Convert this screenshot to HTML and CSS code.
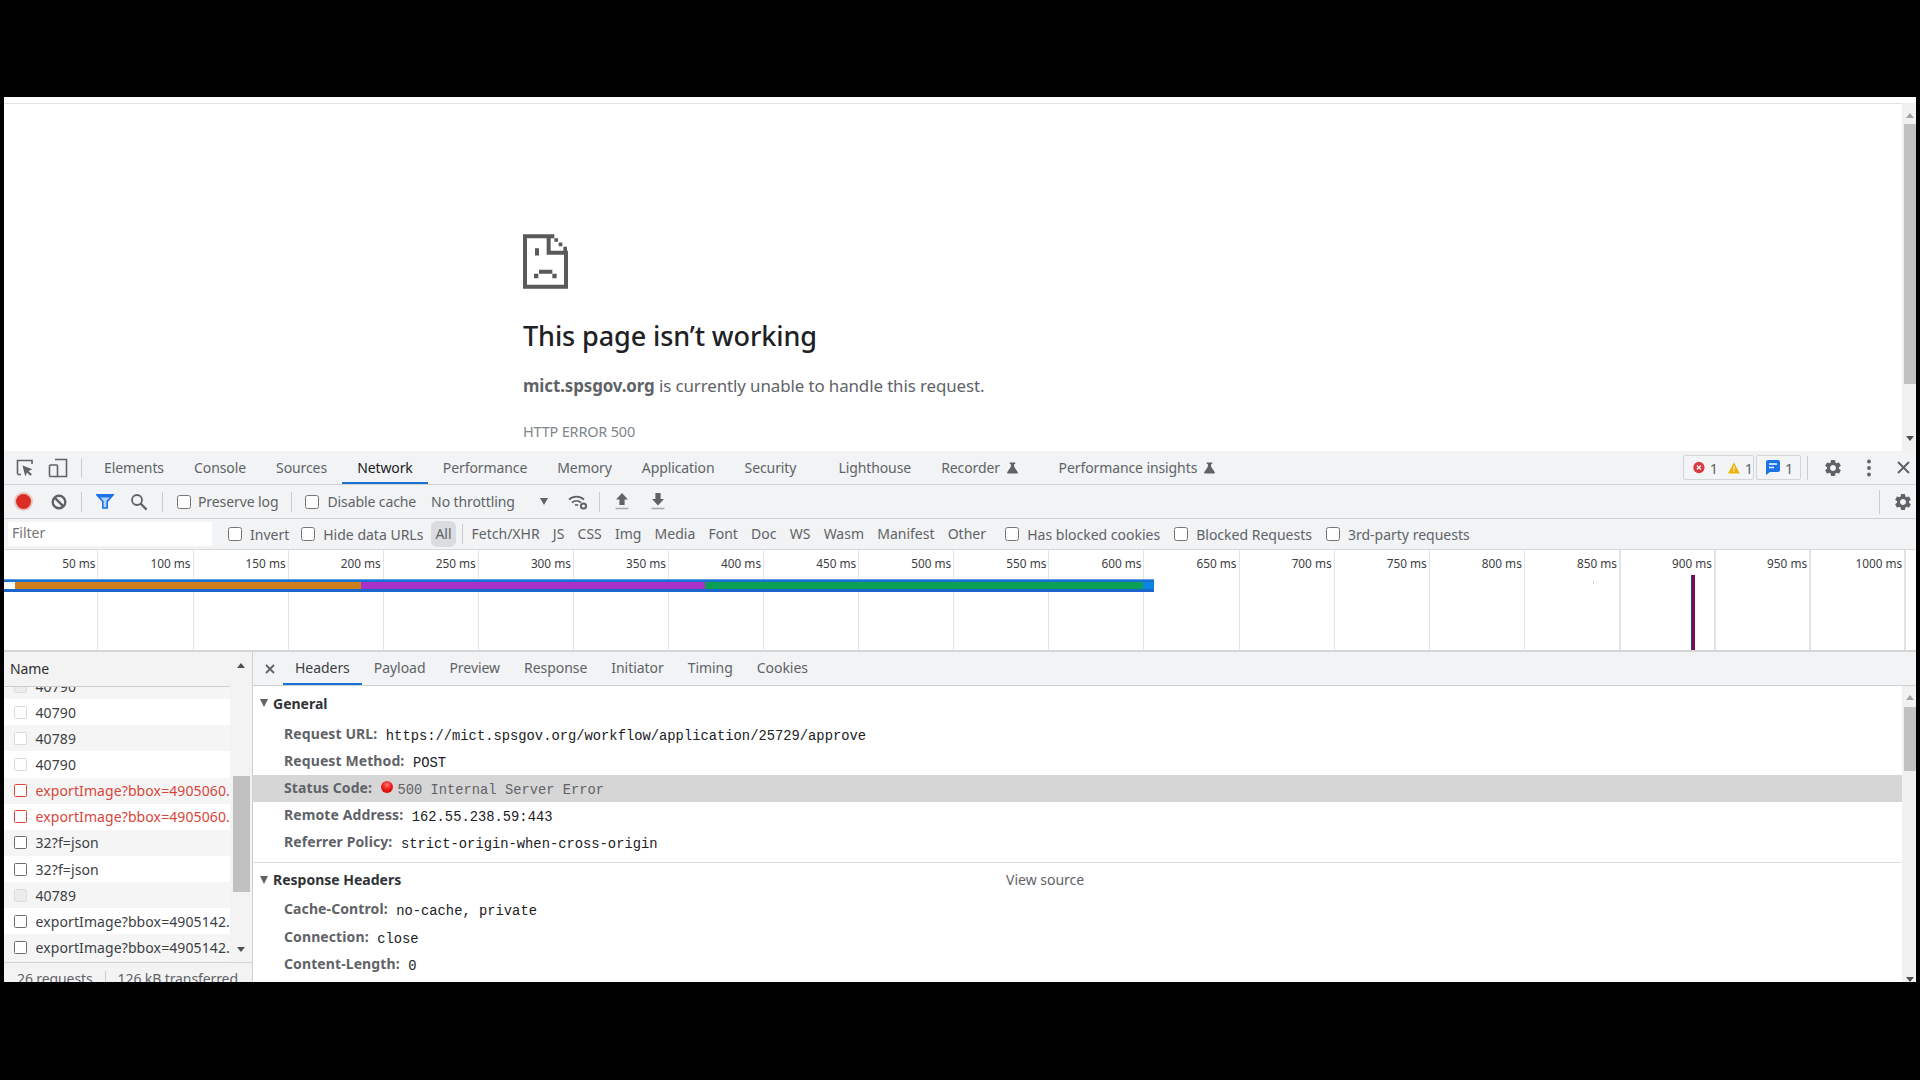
FILE: index.html
```html
<!DOCTYPE html>
<html lang="en">
<head>
<meta charset="utf-8">
<title>This page isn't working</title>
<link rel="stylesheet" href="styles.css">
</head>
<body>
<svg class="sprite" aria-hidden="true">
  <symbol id="gear" viewBox="0 0 24 24"><path d="M19.14 12.94c.04-.3.06-.61.06-.94 0-.32-.02-.64-.07-.94l2.03-1.58a.49.49 0 0 0 .12-.61l-1.92-3.32a.488.488 0 0 0-.59-.22l-2.39.96c-.5-.38-1.03-.7-1.62-.94l-.36-2.54a.484.484 0 0 0-.48-.41h-3.84c-.24 0-.43.17-.47.41l-.36 2.54c-.59.24-1.13.57-1.62.94l-2.39-.96c-.22-.08-.47 0-.59.22L2.74 8.87c-.12.21-.08.47.12.61l2.03 1.58c-.05.3-.09.63-.09.94s.02.64.07.94l-2.03 1.58a.49.49 0 0 0-.12.61l1.92 3.32c.12.22.37.29.59.22l2.39-.96c.5.38 1.03.7 1.62.94l.36 2.54c.05.24.24.41.48.41h3.84c.24 0 .44-.17.47-.41l.36-2.54c.59-.24 1.13-.56 1.62-.94l2.39.96c.22.08.47 0 .59-.22l1.92-3.32c.12-.22.07-.47-.12-.61l-2.01-1.58zM12 15.6c-1.98 0-3.6-1.62-3.6-3.6s1.62-3.6 3.6-3.6 3.6 1.62 3.6 3.6-1.62 3.6-3.6 3.6z" fill="currentColor"/></symbol>
  <symbol id="flask" viewBox="0 0 12 12"><path d="M3 0h6v1.5H7.8v3l4 6.2c.3.6-.1 1.3-.8 1.3H1c-.7 0-1.1-.7-.8-1.3l4-6.2v-3H3z" fill="currentColor"/></symbol>
</svg>
<main class="frame">
  <section class="page">
    <div class="page-body">
      <div class="error">
        <svg class="sad" viewBox="0 0 135 164" aria-hidden="true"><path d="M0 0h94v12H83v38h52v114H0zM12 12v140h111V62H71V12zM94 12h11v11H94zM107 25h11v11h-11zM121 38h11v12h-11zM36 42h12v22H36zM48 107h40v12H48zM33 119h13v13H33zM88 119h13v13H88z" fill="#5a5a5a" fill-rule="evenodd"/></svg>
        <h1 class="err-title">This page isn’t working</h1>
        <p class="err-text"><strong>mict.spsgov.org</strong> is currently unable to handle this request.</p>
        <p class="err-code">HTTP ERROR 500</p>
      </div>
    </div>
    <div class="vscroll page-scroll">
      <span class="arr up grey"></span>
      <span class="vthumb page-thumb"></span>
      <span class="arr down page-down"></span>
    </div>
  </section>

  <section class="devtools">
    <header class="bar tabbar">
      <span class="ib inspect">
        <svg width="19" height="19" viewBox="0 0 19 19" aria-hidden="true"><path d="M2.5 16V2.5H17V6" fill="none" stroke="#5f6368" stroke-width="1.6"/><path d="M2.5 16.5H6" fill="none" stroke="#5f6368" stroke-width="1.6"/><path d="M7.5 7.5l10 3.8-4 1.6 3.4 3.4-1.5 1.5-3.4-3.4-1.7 4z" fill="#5f6368"/></svg>
      </span>
      <span class="ib device">
        <svg width="20" height="20" viewBox="0 0 20 20" aria-hidden="true"><path d="M7 1.5h11.5v17H7" fill="none" stroke="#5f6368" stroke-width="1.6"/><rect x="1.5" y="7" width="8" height="11.5" rx="1" fill="#f1f3f4" stroke="#5f6368" stroke-width="1.6"/></svg>
      </span>
      <span class="sep sep-tab"></span>
      <nav class="tabs">
        <span class="tab">Elements</span>
        <span class="tab">Console</span>
        <span class="tab">Sources</span>
        <span class="tab active">Network</span>
        <span class="tab">Performance</span>
        <span class="tab">Memory</span>
        <span class="tab">Application</span>
        <span class="tab">Security</span>
        <span class="tab tab-gap">Lighthouse</span>
        <span class="tab">Recorder<svg class="flask" aria-hidden="true"><use href="#flask"/></svg></span>
        <span class="tab tab-gap-b">Performance insights<svg class="flask" aria-hidden="true"><use href="#flask"/></svg></span>
      </nav>
      <div class="tab-right">
        <span class="badge badge-issues">
          <svg width="13" height="13" viewBox="0 0 13 13" aria-hidden="true"><circle cx="6.5" cy="6.5" r="6.2" fill="#d93a43"/><path d="M4.3 4.3l4.4 4.4M8.7 4.3l-4.4 4.4" stroke="#fff" stroke-width="1.3"/></svg>
          <span class="num">1</span>
          <svg class="warn" width="13" height="12" viewBox="0 0 13 12" aria-hidden="true"><path d="M6.5 0L13 12H0z" fill="#eab308"/><path d="M6.5 4v4M6.5 9v1.4" stroke="#fff" stroke-width="1.2"/></svg>
          <span class="num">1</span>
        </span>
        <span class="badge badge-msg">
          <svg width="14" height="15" viewBox="0 0 14 15" aria-hidden="true"><path d="M2 0h10a2 2 0 0 1 2 2v8a2 2 0 0 1-2 2H4l-4 3V2a2 2 0 0 1 2-2z" fill="#1a73e8"/><path d="M3 4h8M3 7.5h5" stroke="#fff" stroke-width="1.5"/></svg>
          <span class="num">1</span>
        </span>
        <span class="sep sep-right"></span>
        <svg class="gear gear-top" aria-hidden="true"><use href="#gear"/></svg>
        <svg class="kebab" width="4" height="18" viewBox="0 0 4 18" aria-hidden="true"><circle cx="2" cy="2.5" r="1.9" fill="#5f6368"/><circle cx="2" cy="9" r="1.9" fill="#5f6368"/><circle cx="2" cy="15.5" r="1.9" fill="#5f6368"/></svg>
        <svg class="close" width="13" height="13" viewBox="0 0 13 13" aria-hidden="true"><path d="M1 1l11 11M12 1L1 12" stroke="#5f6368" stroke-width="2"/></svg>
      </div>
    </header>

    <div class="bar toolbar">
      <span class="ib rec-box"><span class="rec"></span></span>
      <span class="ib clear-box">
        <svg width="16" height="16" viewBox="0 0 16 16" aria-hidden="true"><circle cx="8" cy="8" r="6.3" fill="none" stroke="#5f6368" stroke-width="2.4"/><path d="M3.6 3.6l8.8 8.8" stroke="#5f6368" stroke-width="2.4"/></svg>
      </span>
      <span class="sep sep-a"></span>
      <span class="ib filter-box">
        <svg width="18" height="15" viewBox="0 0 18 15" aria-hidden="true"><path d="M0.8 0.8h16.4l-6 6.6V14H6.8V7.4z" fill="#b5d5f5" stroke="#1a73e8" stroke-width="1.6"/><path d="M0.8 0.8h16.4l-2.6 2.8H3.4z" fill="#1a73e8"/></svg>
      </span>
      <span class="ib search-box">
        <svg width="18" height="18" viewBox="0 0 18 18" aria-hidden="true"><circle cx="7" cy="7" r="5" fill="none" stroke="#5f6368" stroke-width="1.8"/><path d="M10.6 10.6l6 6" stroke="#5f6368" stroke-width="2.2"/></svg>
      </span>
      <span class="sep sep-b"></span>
      <label class="check preserve"><input type="checkbox">Preserve log</label>
      <span class="sep sep-c"></span>
      <label class="check disable"><input type="checkbox">Disable cache</label>
      <span class="throttle">No throttling<span class="arr-down"></span></span>
      <span class="ib wifi-box">
        <svg width="20" height="16" viewBox="0 0 20 16" aria-hidden="true"><path d="M1 5.5a11 11 0 0 1 15 0M4 8.5a7 7 0 0 1 9 0M7 11.3a3 3 0 0 1 3 0" fill="none" stroke="#5f6368" stroke-width="1.8"/><circle cx="15.5" cy="12" r="2.6" fill="none" stroke="#5f6368" stroke-width="2"/></svg>
      </span>
      <span class="sep sep-d"></span>
      <span class="ib up-box">
        <svg width="14" height="17" viewBox="0 0 14 17" aria-hidden="true"><path d="M7 0l6 6.5H9.6V12H4.4V6.5H1z" fill="#5f6368"/><path d="M0.5 15.5h13" stroke="#a5a8ac" stroke-width="1.5"/></svg>
      </span>
      <span class="ib down-box">
        <svg width="14" height="17" viewBox="0 0 14 17" aria-hidden="true"><path d="M4.4 0h5.2v6H13l-6 6.5L1 6h3.4z" fill="#5f6368"/><path d="M0.5 15.5h13" stroke="#a5a8ac" stroke-width="1.5"/></svg>
      </span>
      <span class="sep sep-e"></span>
      <svg class="gear gear-low" aria-hidden="true"><use href="#gear"/></svg>
    </div>

    <div class="bar filterbar">
      <span class="filter-input">Filter</span>
      <label class="check invert"><input type="checkbox">Invert</label>
      <label class="check hide"><input type="checkbox">Hide data URLs</label>
      <span class="type all">All</span>
      <span class="sep sep-f"></span>
      <span class="type">Fetch/XHR</span>
      <span class="type">JS</span>
      <span class="type">CSS</span>
      <span class="type">Img</span>
      <span class="type">Media</span>
      <span class="type">Font</span>
      <span class="type">Doc</span>
      <span class="type">WS</span>
      <span class="type">Wasm</span>
      <span class="type">Manifest</span>
      <span class="type">Other</span>
      <label class="check c-blocked"><input type="checkbox">Has blocked cookies</label>
      <label class="check c-req"><input type="checkbox">Blocked Requests</label>
      <label class="check c-3rd"><input type="checkbox">3rd-party requests</label>
    </div>

    <div class="overview">
      <div class="ticks">
        <span class="tick">50 ms</span><span class="tick">100 ms</span><span class="tick">150 ms</span><span class="tick">200 ms</span>
        <span class="tick">250 ms</span><span class="tick">300 ms</span><span class="tick">350 ms</span><span class="tick">400 ms</span>
        <span class="tick">450 ms</span><span class="tick">500 ms</span><span class="tick">550 ms</span><span class="tick">600 ms</span>
        <span class="tick">650 ms</span><span class="tick">700 ms</span><span class="tick">750 ms</span><span class="tick">800 ms</span>
        <span class="tick wide">850 ms</span><span class="tick thick">900 ms</span><span class="tick thick">950 ms</span><span class="tick thick">1000 ms</span>
      </div>
      <div class="wf"><i class="seg s-white"></i><i class="seg s-orange"></i><i class="seg s-purple"></i><i class="seg s-green"></i><i class="seg s-blue"></i></div>
      <span class="speck"></span>
      <span class="loadline"></span>
    </div>

    <div class="lower">
      <aside class="names">
        <div class="names-main">
          <div class="names-list">
            <div class="name-head">Name</div>
            <div class="rows">
              <div class="row odd partial"><span class="fi fi-pale"></span>40790</div>
              <div class="row"><span class="fi fi-light"></span>40790</div>
              <div class="row odd"><span class="fi fi-light"></span>40789</div>
              <div class="row"><span class="fi fi-light"></span>40790</div>
              <div class="row odd err"><span class="fi fi-red"></span>exportImage?bbox=4905060.</div>
              <div class="row err"><span class="fi fi-red"></span>exportImage?bbox=4905060.</div>
              <div class="row odd"><span class="fi fi-dark"></span>32?f=json</div>
              <div class="row"><span class="fi fi-dark"></span>32?f=json</div>
              <div class="row odd"><span class="fi fi-pale"></span>40789</div>
              <div class="row"><span class="fi fi-dark"></span>exportImage?bbox=4905142.</div>
              <div class="row odd"><span class="fi fi-dark"></span>exportImage?bbox=4905142.</div>
            </div>
          </div>
          <div class="names-scroll">
            <span class="arr up"></span>
            <span class="vthumb names-thumb"></span>
            <span class="arr down names-down"></span>
          </div>
        </div>
        <footer class="summary"><span>26 requests</span><span class="sep sep-sum"></span><span>126 kB transferred</span></footer>
      </aside>

      <div class="details">
        <div class="dtabs">
          <svg class="dclose" width="10" height="10" viewBox="0 0 10 10" aria-hidden="true"><path d="M1 1l8 8M9 1L1 9" stroke="#5f6368" stroke-width="1.8"/></svg>
          <span class="dtab active">Headers</span>
          <span class="dtab">Payload</span>
          <span class="dtab">Preview</span>
          <span class="dtab">Response</span>
          <span class="dtab">Initiator</span>
          <span class="dtab">Timing</span>
          <span class="dtab">Cookies</span>
        </div>
        <div class="dbody">
          <div class="dcontent">
            <section class="dsec general">
              <h2 class="dhead"><span class="tri"></span>General</h2>
              <div class="kv"><b>Request URL:</b><code>https://mict.spsgov.org/workflow/application/25729/approve</code></div>
              <div class="kv"><b>Request Method:</b><code>POST</code></div>
              <div class="kv hl"><b>Status Code:</b><span class="dot"></span><code class="muted">500 Internal Server Error</code></div>
              <div class="kv"><b>Remote Address:</b><code>162.55.238.59:443</code></div>
              <div class="kv"><b>Referrer Policy:</b><code>strict-origin-when-cross-origin</code></div>
            </section>
            <section class="dsec">
              <h2 class="dhead"><span class="tri"></span><span class="dhead-title">Response Headers</span><span class="view-src">View source</span></h2>
              <div class="kv"><b>Cache-Control:</b><code>no-cache, private</code></div>
              <div class="kv"><b>Connection:</b><code>close</code></div>
              <div class="kv"><b>Content-Length:</b><code>0</code></div>
            </section>
          </div>
          <div class="vscroll d-scroll">
            <span class="arr up grey"></span>
            <span class="vthumb d-thumb"></span>
            <span class="arr down d-down"></span>
          </div>
        </div>
      </div>
    </div>
  </section>
</main>
</body>
</html>
```

FILE: styles.css
```css
* { box-sizing: border-box; }
html, body { margin: 0; height: 100%; }
body {
  background: #000;
  height: 1080px;
  overflow: hidden;
  padding: 97px 4px 0;
  font-family: "Noto Sans", "Open Sans", sans-serif;
  font-size: 14px;
  letter-spacing: -0.1px;
  color: #5f6368;
}
.sprite { display: none; }
.frame { width: 1912px; height: 885px; overflow: hidden; background: #fff; display: flex; flex-direction: column; }

/* page */
.page { height: 354px; flex: none; display: flex; overflow: hidden; background: #fff; }
.page-body { flex: 1; margin-top: 6px; border-top: 1px solid #e3e3e3; padding: 130px 0 0 519px; }
.sad { display: block; width: 45px; height: 55px; }
.err-title { margin: 30px 0 0; font-size: 27px; line-height: 34px; font-weight: 500; color: #202124; letter-spacing: -0.1px; }
.err-text { margin: 20px 0 0; font-size: 16.9px; line-height: 26px; letter-spacing: -0.1px; }
.err-text strong { font-weight: 700; }
.err-code { margin: 22px 0 0; font-size: 14.5px; line-height: 20px; color: #80868b; letter-spacing: -0.2px; }

/* scrollbars */
.vscroll { flex: none; width: 14px; padding-left: 2px; background: #f1f1f1; display: flex; flex-direction: column; align-items: center; }
.page-scroll { margin-top: 6px; }
.vthumb { display: block; background: #c1c1c1; }
.vscroll .vthumb { width: 100%; }
.arr { display: block; width: 0; height: 0; border-left: 4.5px solid transparent; border-right: 4.5px solid transparent; flex: none; }
.arr.up { border-bottom: 5px solid #505050; }
.arr.down { border-top: 5px solid #505050; }
.arr.grey { border-bottom-color: #a3a3a3; }
.page-scroll .arr.up { margin-top: 10px; }
.page-thumb { margin-top: 6px; height: 260px; }
.page-down { margin-top: 52px; }

/* devtools rows */
.devtools { flex: 1; display: flex; flex-direction: column; background: #f1f3f4; overflow: hidden; }
.bar { display: flex; align-items: center; flex: none; border-bottom: 1px solid #cfd1d3; }
.tabbar { height: 34px; }
.toolbar { height: 34px; }
.filterbar { height: 31px; border-bottom-color: #d6d8da; letter-spacing: 0; }
.ib { flex: none; width: 28px; height: 28px; display: flex; align-items: center; justify-content: center; }
.sep { flex: none; display: block; width: 1px; height: 20px; background: #ccc; }

/* main tabs */
.inspect { margin-left: 6.5px; }
.device { margin-left: 5px; }
.sep-tab { margin-left: 9.5px; }
.tabs { display: flex; margin-left: 7px; height: 33px; }
.tab { padding: 0 15.05px; line-height: 31px; height: 33px; display: flex; align-items: center; white-space: nowrap; }
.tab.active { color: #202124; border-bottom: 2px solid #1a73d2; padding-top: 2px; }
.tab-gap { margin-left: 12px; }
.tab-gap-b { margin-left: 10.5px; }
.flask { width: 11px; height: 12px; margin-left: 7px; color: #5f6368; }
.tab-right { margin-left: auto; display: flex; align-items: center; height: 33px; }
.badge { display: flex; align-items: center; height: 25px; border: 1px solid #d2d4d6; border-radius: 2px; background: #f3f4f5; }
.badge-issues { width: 71px; padding-left: 9px; }
.badge-msg { width: 45px; margin-left: 2px; padding-left: 9px; }
.num { margin-left: 5px; font-size: 14.5px; color: #5f6368; }
.warn { margin-left: 10px; }
.sep-right { margin-left: 6px; height: 24px; }
.gear { display: block; width: 20px; height: 20px; color: #5f6368; flex: none; }
.gear-top { margin-left: 15px; }
.kebab { margin-left: 24px; }
.close { margin-left: 26px; margin-right: 6px; }

/* network toolbar */
.rec-box { margin-left: 5px; }
.rec { width: 15px; height: 15px; border-radius: 50%; background: #dc2c26; box-shadow: 0 0 0 2px rgba(220, 60, 50, 0.25); }
.clear-box { margin-left: 8px; }
.sep-a { margin-left: 8px; }
.filter-box { margin-left: 9px; }
.search-box { margin-left: 6px; }
.sep-b { margin-left: 9px; }
.check { display: flex; align-items: center; flex: none; white-space: nowrap; }
.check input { width: 14px; height: 14px; margin: 0 8px 0 0; flex: none; }
.preserve { margin-left: 14px; }
.preserve input { margin-right: 7px; }
.sep-c { margin-left: 13px; }
.disable { margin-left: 13px; }
.throttle { margin-left: 15px; display: flex; align-items: center; width: 117px; flex: none; }
.arr-down { margin-left: auto; width: 0; height: 0; border-left: 4px solid transparent; border-right: 4px solid transparent; border-top: 7px solid #5f6368; }
.wifi-box { margin-left: 16px; }
.sep-d { margin-left: 7px; }
.up-box { margin-left: 8px; }
.down-box { margin-left: 8px; }
.sep-e { margin-left: auto; height: 24px; }
.gear-low { margin-left: 13px; margin-right: 3px; }

/* filter bar */
.filter-input { flex: none; width: 204px; height: 24px; margin-left: 4px; padding-left: 4px; background: #fff; line-height: 22px; color: #757575; }
.invert { margin-left: 16px; }
.hide { margin-left: 12px; }
.type { flex: none; padding: 0 4px; margin-right: 5.2px; line-height: 26px; height: 26px; white-space: nowrap; }
.all { margin-left: 8px; margin-right: 6px; background: #dadce0; border-radius: 6px; }
.sep-f { margin-right: 5px; }
.c-blocked { margin-left: 10px; }
.c-req { margin-left: 14px; }
.c-3rd { margin-left: 14px; }

/* overview */
.overview { flex: none; height: 102px; position: relative; background: #fff; border-bottom: 2px solid #d4d5d6; overflow: hidden; }
.ticks { display: grid; grid-template-columns: 95.1px repeat(15, 95.1px) 96.1px 95.1px 95.1px 95.1px; height: 100%; margin-left: -0.7px; }
.tick { border-right: 1px solid #e3e5e8; font-size: 11.8px; line-height: 16px; padding: 5px 2px 0 0; text-align: right; color: #3c4043; white-space: nowrap; letter-spacing: 0; }
.tick.wide, .tick.thick { border-right: 2px solid #e2e2e2; }
.wf { position: absolute; left: 0; top: 29px; width: 1150px; height: 13px; display: flex; background: #1a6fd4; border-top: 1px solid #5a9de0; border-bottom: 3px solid #1a66cc; padding-top: 2px; }
.seg { display: block; height: 100%; flex: none; }
.s-white { width: 11px; background: #fff; }
.s-orange { width: 346px; background: #ce7f1c; }
.s-purple { width: 344px; background: #a832c8; }
.s-green { width: 438px; background: #0a9f55; }
.s-blue { width: 11px; background: #0c84e4; }
.speck { position: absolute; left: 1589px; top: 31px; width: 1px; height: 3px; background: #d5d5d5; }
.loadline { position: absolute; left: 1687px; top: 25px; width: 4px; height: 75px; background: linear-gradient(90deg, #2a3a9a 0 25%, #78104f 25% 100%); }

/* lower */
.lower { flex: 1; display: flex; min-height: 0; }
.names { flex: none; width: 248px; display: flex; flex-direction: column; background: #f3f3f3; border-right: 0; }
.names-main { flex: none; height: 310px; display: flex; }
.names-list { flex: none; width: 226px; display: flex; flex-direction: column; overflow: hidden; }
.name-head { flex: none; height: 35px; padding: 0 0 0 6px; line-height: 34px; color: #303030; border-bottom: 1px solid #cdcdcd; background: #f3f3f3; }
.rows { flex: 1; overflow: hidden; }
.row { height: 26.15px; display: flex; align-items: center; background: #fff; padding-left: 10px; color: #3c4043; white-space: nowrap; overflow: hidden; letter-spacing: 0.1px; }
.row.odd { background: #f5f5f5; }
.row.partial { margin-top: -14px; }
.row.err { color: #d8453a; }
.fi { flex: none; width: 13px; height: 13px; margin-right: 8.5px; border: 1.5px solid #777; border-radius: 1.5px; background: #fff; }
.fi-light { border-color: #d9d9d9; border-width: 1px; }
.fi-pale { border-color: #dcdcdc; border-width: 1px; background: #ececec; }
.fi-red { border-color: #de4638; }
.fi-dark { border-color: #6d6d6d; }
.names-scroll { flex: 1; display: flex; flex-direction: column; align-items: center; }
.names-scroll .arr.up { margin-top: 11px; }
.names-thumb { width: 17px; margin-top: 108px; height: 116px; }
.names-down { margin-top: 55px; }
.summary { flex: 1; display: flex; align-items: flex-start; padding: 6px 0 0 13px; line-height: 20px; font-size: 14px; border-top: 1px solid #d4d4d4; white-space: nowrap; overflow: hidden; color: #5f6368; }
.sep-sum { margin: 2px 12px 0; height: 22px; }

.details { flex: 1; min-width: 0; display: flex; flex-direction: column; background: #fff; border-left: 1px solid #cfcfcf; }
.dtabs { flex: none; height: 34px; display: flex; align-items: center; background: #f1f3f4; border-bottom: 1px solid #cfd1d3; padding-left: 12px; letter-spacing: -0.05px; }
.dclose { margin-right: 8px; flex: none; }
.dtab { padding: 0 12px; height: 33px; line-height: 31px; white-space: nowrap; flex: none; }
.dtab.active { color: #3c4043; border-bottom: 2px solid #1a73d2; }
.dbody { flex: 1; min-height: 0; display: flex; }
.dcontent { flex: 1; min-width: 0; overflow: hidden; }
.general { border-bottom: 1px solid #dcdcdc; padding-bottom: 6px; }
.dhead { margin: 0; height: 33px; display: flex; align-items: center; padding-left: 7px; font-size: 14px; font-weight: 700; color: #303336; letter-spacing: 0; }
.general .dhead { height: 34.5px; }
.tri { flex: none; width: 0; height: 0; border-left: 4.5px solid transparent; border-right: 4.5px solid transparent; border-top: 8px solid #5f6368; margin-right: 5px; }
.dhead-title { width: 733px; flex: none; }
.view-src { font-weight: 400; color: #5f6368; }
.kv { height: 27.2px; display: flex; align-items: baseline; padding-left: 31px; line-height: 25px; }
.kv b { font-weight: 700; color: #5f6368; margin-right: 8.5px; white-space: nowrap; letter-spacing: 0.1px; }
.kv code { font-family: "Liberation Mono", monospace; font-size: 13.8px; color: #202124; letter-spacing: 0; position: relative; top: 1px; }
.kv code.muted { color: #5f6368; font-size: 13.75px; }
.hl { background: #d6d6d6; }
.dot { flex: none; align-self: center; width: 12px; height: 12px; margin-right: 5px; border-radius: 50%; background: radial-gradient(circle at 50% 30%, #ff7a70 0, #ee1c1c 45%, #c70000 100%); position: relative; top: -1px; }
.d-scroll .arr.up { margin-top: 9px; }
.d-thumb { margin-top: 7px; height: 72px; }
.d-down { margin-top: 206px; }
```
